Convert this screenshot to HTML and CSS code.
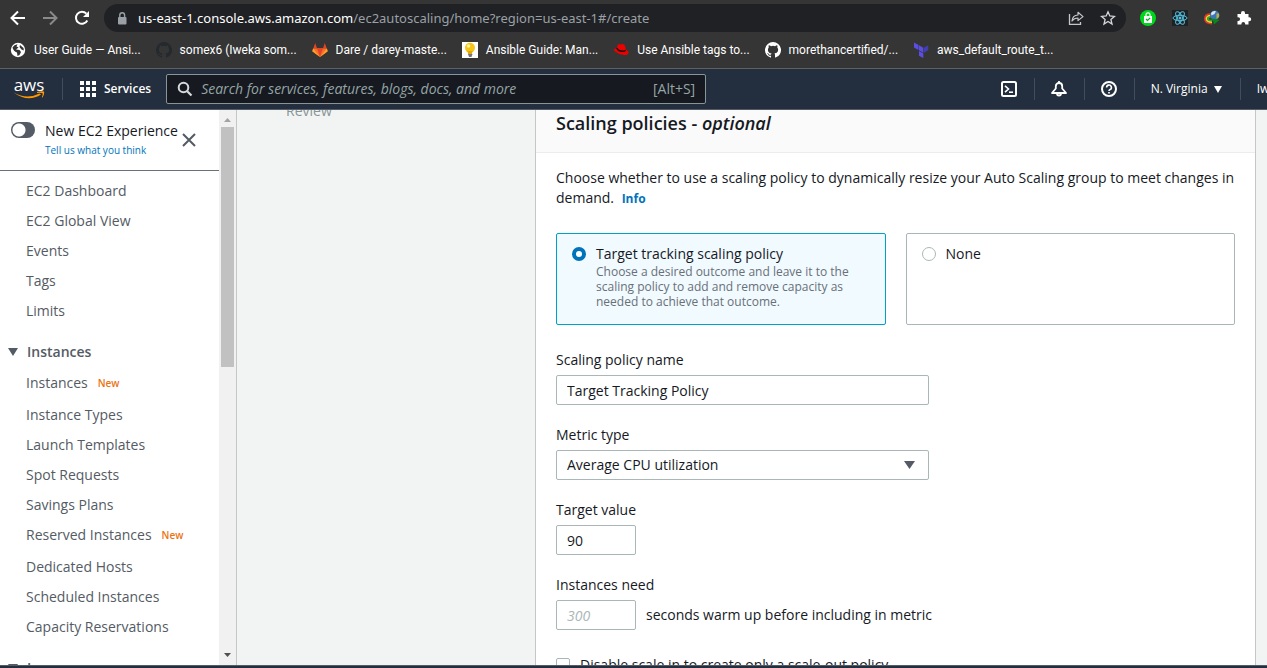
FILE: index.html
```html
<!DOCTYPE html>
<html lang="en">
<head>
<meta charset="utf-8">
<title>Create Auto Scaling group | EC2</title>
<link rel="stylesheet" href="styles.css">
</head>
<body>
<div class="screen">
  <header class="browser">
    <div class="toolbar">
      <button class="icon-btn" aria-label="Back"><svg width="16" height="16" viewBox="0 0 16 16"><path d="M15 8H2M8 1.500L1.500 8L8 14.500" fill="none" stroke="#fff" stroke-width="2"/></svg></button>
      <button class="icon-btn" aria-label="Forward"><svg width="16" height="16" viewBox="0 0 16 16"><path d="M1 8H14M8 1.500L14.500 8L8 14.500" fill="none" stroke="#8a8a8a" stroke-width="2"/></svg></button>
      <button class="icon-btn" aria-label="Reload"><svg width="16" height="16" viewBox="0 0 16 16"><path d="M13.300 10.500A6 6 0 1 1 12.400 3.700" fill="none" stroke="#fff" stroke-width="2"/><path d="M15 1V7H9Z" fill="#fff"/></svg></button>
      <div class="omnibox">
        <svg width="10" height="13" viewBox="0 0 10 13"><rect x="1" y="5" width="8.500" height="7.500" rx="1" fill="#9aa0a6"/><path d="M2.800 5V3.200a2.400 2.400 0 0 1 4.800 0V5" fill="none" stroke="#9aa0a6" stroke-width="1.400"/></svg>
        <p class="url"><span class="host">us-east-1.console.aws.amazon.com</span>/ec2autoscaling/home?region=us-east-1#/create</p>
        <button class="icon-btn" aria-label="Share"><svg width="16" height="16" viewBox="0 0 16 16"><path d="M1.500 4V14.300H12.500V12" fill="none" stroke="#c4c7ca" stroke-width="1.300"/><path d="M4 11C4.300 7 6.500 5.200 10 5V2.300L15 6.600L10 10.600V8C7.500 8 5.500 8.800 4 11Z" fill="none" stroke="#c4c7ca" stroke-width="1.200" stroke-linejoin="round"/></svg></button>
        <button class="icon-btn" aria-label="Bookmark this page"><svg width="16" height="16" viewBox="0 0 16 16"><path d="M8 1.800L9.800 6L14.400 6.400L10.900 9.400L12 14L8 11.500L4 14L5.100 9.400L1.600 6.400L6.200 6Z" fill="none" stroke="#d5d7da" stroke-width="1.300"/></svg></button>
      </div>
      <div class="extensions">
        <button class="icon-btn" aria-label="Shopping extension"><svg width="16" height="16" viewBox="0 0 16 16"><circle cx="8" cy="8" r="8" fill="#00d71c"/><path d="M4 6H12V13H4Z" fill="#fff"/><path d="M6 6V4.800a2 2 0 0 1 4 0V6" fill="none" stroke="#fff" stroke-width="1.200"/><path d="M6 9L7.500 10.500L10.200 7.800" fill="none" stroke="#00b31a" stroke-width="1.200"/></svg></button>
        <button class="icon-btn" aria-label="React developer tools"><svg width="16" height="16" viewBox="0 0 16 16"><rect width="16" height="16" fill="#202124"/><g fill="none" stroke="#53c1de" stroke-width="1"><ellipse cx="8" cy="8" rx="7" ry="2.700"/><ellipse cx="8" cy="8" rx="7" ry="2.700" transform="rotate(60 8 8)"/><ellipse cx="8" cy="8" rx="7" ry="2.700" transform="rotate(120 8 8)"/></g><circle cx="8" cy="8" r="1.500" fill="#53c1de"/></svg></button>
        <button class="icon-btn" aria-label="Download manager"><svg width="16" height="16" viewBox="0 0 16 16"><g fill="none" stroke-width="1.700"><path d="M6.500 4.200C2.500 4.200 .900 6.500 .900 8.800C.900 11.500 3.500 13.600 8 13.600" stroke="#e3362c"/><path d="M6.500 5.700C3.800 5.700 2.400 7 2.400 8.800C2.400 11 4.500 12.100 8 12.100" stroke="#f2d327"/><path d="M6.500 7.200C4.800 7.200 3.900 7.800 3.900 8.800C3.900 10 5.200 10.700 8 10.700" stroke="#31a937"/></g><circle cx="10.800" cy="5.300" r="4.700" fill="#3f74b8"/><path d="M7 3A4.500 4.500 0 0 1 12 1.200L10.500 4L7.500 5.500Z" fill="#dbe8f3"/><path d="M12.500 3.500L15 3.500L15 7L12.500 9Z" fill="#b9ad45"/><path d="M5.500 8.200L15.800 9.800L10 14.500L9.500 11.500Z" fill="#078b13"/></svg></button>
        <button class="icon-btn" aria-label="Extensions"><svg width="16" height="16" viewBox="0 0 16 16"><path d="M1.500 4H5V3a2 2 0 0 1 4 0V4H12.500V7.200H13.200a2 2 0 0 1 0 4H12.500V14.500H9.200V14a1.900 1.900 0 0 0-3.800 0V14.500H1.500V11H2.200a1.900 1.900 0 0 0 0-3.800H1.500Z" fill="#fff"/></svg></button>
      </div>
    </div>
    <nav class="bookmarks" aria-label="Bookmarks">
      <a href="#"><svg width="16" height="16" viewBox="0 0 16 16"><circle cx="8" cy="8" r="7.200" fill="#fff"/><path d="M2.500 5.500Q4 2.500 7.500 2.200L6.500 4.500L8.500 5.500L6 7.500L9.500 8L11 10L9.500 13L7.500 14L7 10.500Q3.500 9.500 2.500 5.500ZM10 3L13.500 6L13.800 8.500L11.500 7.500L9.500 5Z" fill="#333"/></svg><span>User Guide — Ansi...</span></a>
      <a href="#"><svg width="16" height="16" viewBox="0 0 16 16"><path fill="#24292e" d="M8 0a8 8 0 0 0-2.530 15.590c.4.070.55-.17.550-.38v-1.490c-2.230.48-2.700-.95-2.700-.95-.36-.92-.89-1.170-.89-1.170-.73-.5.060-.49.060-.49.800.060 1.230.83 1.230.83.720 1.220 1.870.87 2.330.66.070-.52.280-.87.510-1.070-1.780-.2-3.640-.89-3.640-3.950 0-.87.310-1.590.82-2.150-.08-.2-.36-1.020.080-2.120 0 0 .67-.21 2.200.82a7.600 7.600 0 0 1 4 0c1.530-1.040 2.200-.82 2.200-.82.440 1.100.160 1.920.080 2.120.51.560.82 1.270.82 2.150 0 3.070-1.870 3.750-3.650 3.950.29.250.54.730.54 1.480v2.200c0 .21.150.46.550.38A8 8 0 0 0 8 0Z"/></svg><span>somex6 (Iweka som...</span></a>
      <a href="#"><svg width="16" height="16" viewBox="0 0 16 16"><path d="M8 15L.300 9.200L1.200 6.300H14.800L15.700 9.200Z" fill="#fc6d26"/><path d="M8 15L5 6.300H11Z" fill="#e24329"/><path d="M.300 9.200L3.200 1L5 6.300H1.200ZM15.700 9.200L12.800 1L11 6.300H14.800Z" fill="#e24329"/><path d="M1.200 6.500L.300 9.200L8 15ZM14.800 6.500L15.700 9.200L8 15Z" fill="#fca326"/></svg><span>Dare / darey-maste...</span></a>
      <a href="#"><svg width="16" height="16" viewBox="0 0 16 16"><rect width="16" height="16" fill="#fff"/><circle cx="8" cy="5.800" r="5" fill="#f5c518"/><path d="M5.500 9H10.500L10 12H6Z" fill="#e3a80e"/><path d="M6 12H10.500L9.500 15H7Z" fill="#777"/><circle cx="6.500" cy="4" r="1.800" fill="#fff3a0"/></svg><span>Ansible Guide: Man...</span></a>
      <a href="#"><svg width="16" height="16" viewBox="0 0 16 16"><path d="M3.500 6.500L5 2.600Q6 1.800 7.500 2.500Q9 1.600 11 2.500Q12.500 3.500 12.800 7.500Q15.800 9 15.600 11Q15 13.600 11 13Q6 12.600 2 9.500Q-1 6.500 3.500 6.500Z" fill="#e00"/><path d="M3.300 6.500Q4.500 9.600 9 10Q12 10.200 12.800 9L12.700 7.500Q12 8.800 9.500 8.500Q5.500 8 3.700 5.500Z" fill="#111"/></svg><span>Use Ansible tags to...</span></a>
      <a href="#"><svg width="16" height="16" viewBox="0 0 16 16"><path fill="#fff" d="M8 0a8 8 0 0 0-2.530 15.590c.4.070.55-.17.550-.38v-1.490c-2.230.48-2.700-.95-2.700-.95-.36-.92-.89-1.170-.89-1.170-.73-.5.060-.49.060-.49.800.060 1.230.83 1.230.83.720 1.220 1.870.87 2.330.66.070-.52.280-.87.510-1.070-1.780-.2-3.640-.89-3.640-3.950 0-.87.310-1.590.82-2.150-.08-.2-.36-1.020.080-2.120 0 0 .67-.21 2.200.82a7.600 7.600 0 0 1 4 0c1.530-1.040 2.200-.82 2.200-.82.440 1.100.160 1.920.080 2.120.51.560.82 1.270.82 2.150 0 3.070-1.870 3.750-3.650 3.950.29.250.54.730.54 1.480v2.200c0 .21.150.46.550.38A8 8 0 0 0 8 0Z"/></svg><span>morethancertified/...</span></a>
      <a href="#"><svg width="16" height="16" viewBox="0 0 16 16"><path d="M1 .500L5.500 3V8L1 5.500ZM6 3.300L10.300 5.800V10.700L6 8.200ZM6 9L10.300 11.500V16L6 13.700Z" fill="#5c4ee5"/><path d="M10.900 5.800L15.200 3.300V8.200L10.900 10.700Z" fill="#4040b2"/></svg><span>aws_default_route_t...</span></a>
    </nav>
  </header>

  <header class="console-nav">
    <a class="aws-logo" href="#" aria-label="AWS home"><span>aws</span><svg width="32" height="9" viewBox="0 0 32 9"><path d="M.500 1.500Q14 9 26.500 2.500L28 3.500Q15 12 .500 1.500Z" fill="#f90"/><path d="M24 .900Q28 -.300 31 .500Q31.800 3 29.500 6.500L28.800 6.200Q30 3.500 29.600 2.200Q28 1.600 24 2Z" fill="#f90"/></svg></a>
    <button class="services"><svg width="16" height="16" viewBox="0 0 16 16" fill="#fff"><path d="M0 0h4v4H0zM6 0h4v4H6zM12 0h4v4h-4zM0 6h4v4H0zM6 6h4v4H6zM12 6h4v4h-4zM0 12h4v4H0zM6 12h4v4H6zM12 12h4v4h-4z"/></svg>Services</button>
    <div class="search">
      <svg width="16" height="16" viewBox="0 0 16 16"><circle cx="6.500" cy="6.500" r="4.800" fill="none" stroke="#d5dbdb" stroke-width="2"/><path d="M10 10L14.500 14.500" stroke="#d5dbdb" stroke-width="2.200"/></svg>
      <input type="search" aria-label="Search" placeholder="Search for services, features, blogs, docs, and more">
      <kbd>[Alt+S]</kbd>
    </div>
    <div class="nav-tools">
      <button class="tool" aria-label="CloudShell"><svg width="16" height="16" viewBox="0 0 16 16" fill="none" stroke="#fff" stroke-width="2"><rect x="1" y="1" width="14" height="14" rx="1.500"/><path d="M4 4.800L7.500 8L4 11.200" stroke-width="1.600"/><path d="M8 11.200H12" stroke-width="1.600"/></svg></button>
      <button class="tool" aria-label="Notifications"><svg width="16" height="16" viewBox="0 0 16 16" fill="none" stroke="#fff" stroke-width="1.800"><path d="M1 12L4.800 7.500V5.200a3.200 3.200 0 0 1 6.400 0V7.500L15 12Z" stroke-linejoin="round"/><path d="M6 12.500a2 2 0 0 0 4 0M8 0V2"/></svg></button>
      <button class="tool" aria-label="Help"><svg width="16" height="16" viewBox="0 0 16 16" fill="none" stroke="#fff" stroke-width="2"><circle cx="8" cy="8" r="7"/><path d="M5.600 6.500a2.400 2.400 0 1 1 3.500 2.100Q8 9.100 8 10" stroke-width="1.600"/><path d="M8 11v1.600" stroke-width="1.700"/></svg></button>
      <button class="region">N. Virginia <svg width="8" height="8" viewBox="0 0 8 8"><path d="M0 1H8L4 8Z" fill="#fff"/></svg></button>
      <button class="account">Iweka</button>
    </div>
  </header>

  <div class="workspace">
    <aside class="sidebar">
      <div class="side-content">
        <div class="experience">
          <label class="toggle"><input type="checkbox" aria-label="New EC2 Experience"></label>
          <div class="experience-text"><p>New EC2 Experience</p><a href="#">Tell us what you think</a></div>
          <button class="icon-btn" aria-label="Close"><svg width="14" height="14" viewBox="0 0 14 14"><path d="M1 1L13 13M13 1L1 13" stroke="#545b64" stroke-width="2"/></svg></button>
        </div>
        <ul class="side-list">
          <li><a href="#">EC2 Dashboard</a></li>
          <li><a href="#">EC2 Global View</a></li>
          <li><a href="#">Events</a></li>
          <li><a href="#">Tags</a></li>
          <li><a href="#">Limits</a></li>
        </ul>
        <button class="group"><svg width="10" height="8" viewBox="0 0 10 8"><path d="M0 0H10L5 8Z" fill="#545b64"/></svg>Instances</button>
        <ul class="side-list">
          <li class="flagged"><a href="#">Instances</a><span class="new">New</span></li>
          <li><a href="#">Instance Types</a></li>
          <li><a href="#">Launch Templates</a></li>
          <li><a href="#">Spot Requests</a></li>
          <li><a href="#">Savings Plans</a></li>
          <li class="flagged"><a href="#">Reserved Instances</a><span class="new">New</span></li>
          <li><a href="#">Dedicated Hosts</a></li>
          <li><a href="#">Scheduled Instances</a></li>
          <li><a href="#">Capacity Reservations</a></li>
        </ul>
        <button class="group"><svg width="10" height="8" viewBox="0 0 10 8"><path d="M0 0H10L5 8Z" fill="#545b64"/></svg>Images</button>
      </div>
      <div class="scrollbar" aria-hidden="true">
        <svg width="7" height="4" viewBox="0 0 7 4"><path d="M0 4L3.500 0L7 4Z" fill="#a3a3a3"/></svg>
        <div class="track"><div class="thumb"></div></div>
        <svg width="7" height="4" viewBox="0 0 7 4"><path d="M0 0L3.500 4L7 0Z" fill="#505050"/></svg>
      </div>
    </aside>

    <main class="page">
      <div class="steps"><p>Review</p></div>
      <section class="panel">
        <h2>Scaling policies - <em>optional</em></h2>
        <form class="panel-body">
          <p class="intro">Choose whether to use a scaling policy to dynamically resize your Auto Scaling group to meet changes in demand. <a href="#">Info</a></p>
          <div class="tiles">
            <label class="tile selected"><input type="radio" name="policy" checked><span class="tile-text">Target tracking scaling policy<small>Choose a desired outcome and leave it to the scaling policy to add and remove capacity as needed to achieve that outcome.</small></span></label>
            <label class="tile"><input type="radio" name="policy"><span class="tile-text">None</span></label>
          </div>
          <div class="field"><label for="name">Scaling policy name</label><input id="name" type="text" value="Target Tracking Policy"></div>
          <div class="field"><label for="metric">Metric type</label><select id="metric"><option>Average CPU utilization</option></select></div>
          <div class="field"><label for="target">Target value</label><input id="target" class="short" type="text" value="90"></div>
          <div class="field"><label for="warm">Instances need</label><div class="inline"><input id="warm" class="short" type="text" placeholder="300"><span>seconds warm up before including in metric</span></div></div>
          <label class="check"><input type="checkbox">Disable scale in to create only a scale-out policy</label>
        </form>
      </section>
    </main>
  </div>
  <footer class="console-footer"></footer>
</div>
</body>
</html>
```

FILE: styles.css
```css
* { box-sizing: border-box; }

body, p, ul, h2 { margin: 0; padding: 0; }

body {
  font-family: "Open Sans", "Noto Sans", sans-serif;
  font-size: 14px;
  line-height: 20px;
  color: #16191f;
}

button { border: 0; padding: 0; background: none; font: inherit; color: inherit; }
input, select { font: inherit; color: inherit; margin: 0; }
a { color: inherit; text-decoration: none; }
ul { list-style: none; }
svg { display: block; flex: none; }

.screen { display: flex; flex-direction: column; height: 100vh; overflow: hidden; }

/* Browser frame */
.browser { flex: none; background: #353535; border-bottom: 1px solid #5f6061; color: #fff; }
.toolbar { display: flex; align-items: center; gap: 16px; padding: 4px 15px 0 10px; }
.icon-btn { flex: none; }
.omnibox {
  display: flex; align-items: center; gap: 16px; flex: 1; min-width: 0;
  height: 28px; padding: 0 10px 0 13px; margin: 0 -2px;
  border-radius: 14px; background: #202124;
}
.url { flex: 1; min-width: 0; margin-left: -5px; white-space: nowrap; overflow: hidden; color: #9aa0a6; font-family: "Noto Sans", sans-serif; font-size: 13px; }
.host { color: #fff; }
.extensions { display: flex; gap: 16px; }
.bookmarks {
  display: flex; align-items: center; gap: 15px; height: 36px; padding: 0 10px;
  font-family: Roboto, sans-serif; font-size: 12px; white-space: nowrap;
}
.bookmarks a { display: flex; align-items: center; gap: 8px; }

/* Console navigation */
.console-nav {
  display: flex; align-items: center; flex: none; height: 41px;
  background: #232f3e; border-bottom: 1px solid #545b64; color: #fff; font-weight: 500;
}
.aws-logo { display: flex; flex-direction: column; align-items: center; flex: none; width: 63px; padding: 0 4px 0 0; border-right: 1px solid #414d5c; font-size: 17px; line-height: 13px; }
.services { display: flex; align-items: center; gap: 8px; flex: none; padding: 0 15px 0 17px; font-size: 12px; font-weight: 600; }
.search {
  display: flex; align-items: center; gap: 8px; flex: none; width: 540px; height: 30px;
  padding: 0 10px; border: 1px solid #879596; border-radius: 2px; background: #16191f; color: #95a5a6;
  font-weight: 400;
}
.search input { flex: 1; min-width: 0; border: 0; padding: 0; background: none; outline: 0; }
.search input::placeholder { color: #95a5a6; font-style: italic; opacity: 1; }
.search kbd { font: inherit; }
.nav-tools { display: flex; align-items: center; flex: none; margin-left: auto; margin-right: -22px; }
.nav-tools button { display: flex; align-items: center; height: 22px; border-left: 1px solid #414d5c; }
.nav-tools .tool { justify-content: center; width: 50px; }
.nav-tools .tool:first-child { border-left: 0; }
.nav-tools .region { gap: 6px; padding: 0 18px 0 16px; font-size: 12px; }
.nav-tools .account { padding-left: 16px; font-size: 12px; }

/* Workspace */
.workspace { display: flex; flex: 1; min-height: 0; overflow: hidden; background: #f2f3f3; }
.sidebar { display: flex; flex: none; width: 237px; border-right: 1px solid #c6c6c6; background: #fff; }
.side-content { flex: 1; min-width: 0; overflow: hidden; color: #545b64; }
.experience { display: flex; align-items: center; gap: 10px; height: 61px; padding: 0 0 0 11px; border-bottom: 1px solid #687078; }
.experience-text { margin-right: -6px; color: #16191f; line-height: 20px; white-space: nowrap; }
.experience-text a { display: block; font-size: 10px; line-height: 18px; color: #0073bb; }
.toggle { align-self: flex-start; padding-top: 12px; }
.toggle input {
  display: block; appearance: none; width: 24px; height: 16px; border-radius: 8px; background: #545b64;
  background-image: radial-gradient(circle at 8px 8px, #fff 6px, transparent 7px);
}
.side-list { padding: 5px 0 0 26px; }
.side-list li { display: flex; align-items: center; gap: 10px; height: 30px; }
.side-list .flagged { height: 32px; padding-bottom: 2px; }
.new { font-size: 10px; font-weight: 600; color: #ec7211; }
.group { display: flex; align-items: center; gap: 9px; height: 30px; margin-top: 11px; padding-left: 8px; font-weight: 600; }
.group + .side-list { padding-top: 1px; }
.scrollbar { display: flex; flex-direction: column; align-items: center; flex: none; width: 17px; padding: 8px 0; background: #f1f1f1; }
.track { flex: 1; width: 13px; margin: 5px 0; }
.thumb { height: 46%; background: #c1c1c1; }

.page { display: flex; flex: 1; min-width: 0; overflow: hidden; padding-right: 11px; }
.steps { flex: none; width: 298px; padding-left: 49px; margin-top: -9px; color: #879596; }
.panel { flex: 1; min-width: 0; border: solid #c6c6c6; border-width: 0 1px; background: #fff; }
.panel h2 { height: 43px; padding: 3px 20px 0; border-bottom: 1px solid #eaeded; background: #fafafa; font-size: 18px; font-weight: 600; line-height: 20px; }
.panel-body { display: flex; flex-direction: column; gap: 20px; padding: 15px 20px 0; }
.intro a { margin-left: 4px; font-size: 12px; font-weight: 700; line-height: 16px; color: #0073bb; }
.tiles { display: grid; grid-template-columns: 1fr 1fr; gap: 20px; padding: 5px 0; }
.tile { display: flex; gap: 10px; min-height: 92px; padding: 10px 15px; border: 1px solid #aab7b8; border-radius: 2px; }
.tile.selected { border-color: #00a1c9; background: #f1faff; }
.tile input { appearance: none; flex: none; width: 14px; height: 14px; margin-top: 3px; border: 1px solid #aab7b8; border-radius: 50%; background: #fff; }
.tile input:checked { border: 4px solid #0073bb; }
.tile small { display: block; font-size: 12px; line-height: 15px; color: #687078; }
.field { display: flex; flex-direction: column; gap: 5px; }
.field input, .field select { width: 55%; height: 30px; padding: 0 10px; border: 1px solid #aab7b8; border-radius: 2px; background: #fff; }
.field select {
  appearance: none;
  background: #fff url("data:image/svg+xml,%3Csvg xmlns='http://www.w3.org/2000/svg' width='11' height='8'%3E%3Cpath d='M0 0H11L5.500 8Z' fill='%23545b64'/%3E%3C/svg%3E") no-repeat right 13px center;
}
.field .short { width: 80px; }
.field input::placeholder { color: #aab7b8; font-style: italic; opacity: 1; }
.inline { display: flex; align-items: center; gap: 10px; }
.check { display: flex; align-items: center; gap: 10px; padding-top: 5px; }
.check input { appearance: none; width: 14px; height: 14px; border: 1px solid #aab7b8; border-radius: 2px; background: #fff; }

.console-footer { flex: none; height: 3px; border-top: 1px solid #545b64; background: #232f3e; }
```
